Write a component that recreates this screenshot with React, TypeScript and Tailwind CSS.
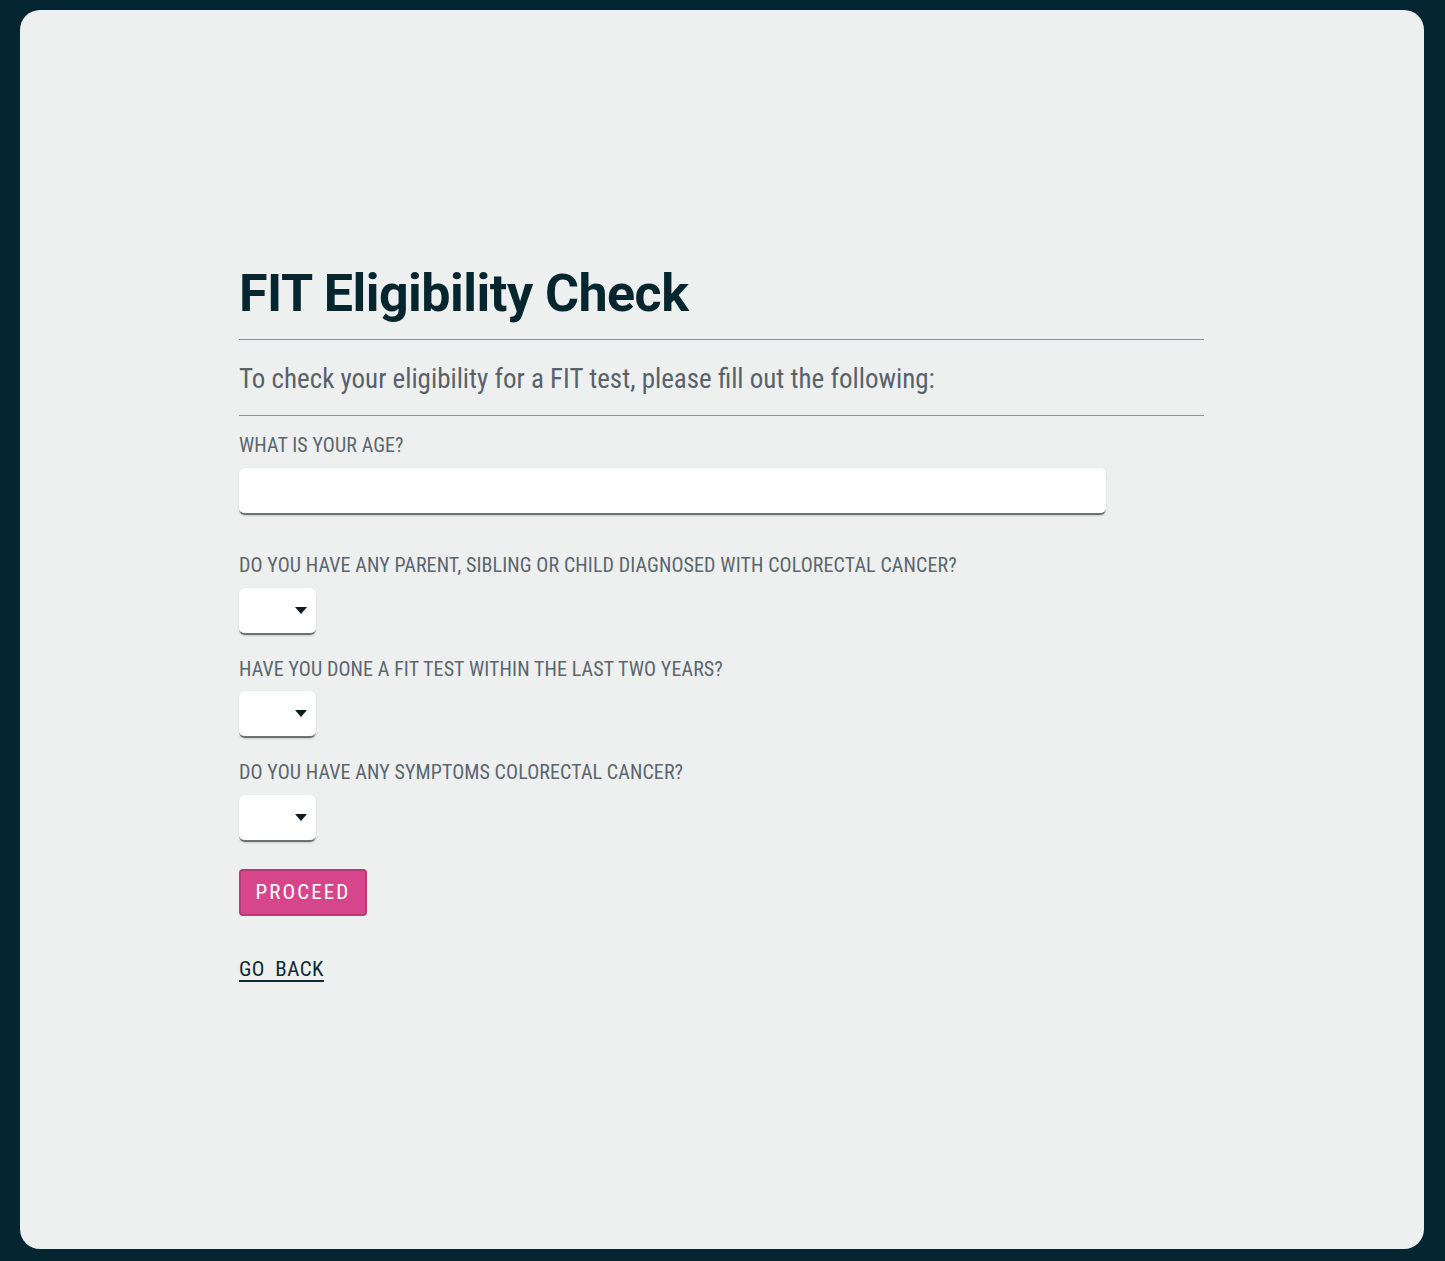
const labelCls = 'block text-[20px] leading-[22px] uppercase text-[#5b656d] tracking-[0.005em]'
const fieldCls = 'bg-white rounded-[6px] border-b-2 border-[#6b7275] shadow-[0_1px_2px_rgba(0,0,0,0.15)] h-[47px]'

function SelectBox() {
  return (
    <div className={`${fieldCls} w-[77px] flex items-center justify-end pr-[9px]`}>
      <svg width="12" height="7" viewBox="0 0 12 7"><path d="M0 0h12L6 7z" fill="#0e1a1f" /></svg>
    </div>
  )
}

export default function App() {
  return (
    <div className="min-h-screen bg-[#032631] p-[10px_21px_12px_20px] font-['Roboto',sans-serif]" style={{ fontStretch: 'condensed' }}>
      <div className="h-[1239px] rounded-[20px] bg-[#eef0f0] flex flex-col pt-[254px] pl-[219px] pr-[220px]">
        <h1 className="text-[52px] leading-[60px] font-bold text-[#05252f] tracking-[-0.01em]" style={{ fontStretch: 'normal' }}>FIT Eligibility Check</h1>
        <hr className="mt-[15px] border-t border-[#8c9396]" />
        <p className="mt-[22px] text-[27px] leading-[34px] text-[#57626b]">
          To check your eligibility for a FIT test, please fill out the following:
        </p>
        <hr className="mt-[19px] border-t border-[#8c9396]" />
        <label className={`${labelCls} mt-[18px]`}>What is your age?</label>
        <div className={`${fieldCls} mt-[12px] w-[867px]`} />
        <label className={`${labelCls} mt-[39px]`}>Do you have any parent, sibling or child diagnosed with colorectal cancer?</label>
        <div className="mt-[12px]"><SelectBox /></div>
        <label className={`${labelCls} mt-[23px]`}>Have you done a FIT test within the last two years?</label>
        <div className="mt-[11px]"><SelectBox /></div>
        <label className={`${labelCls} mt-[23px]`}>Do you have any symptoms colorectal cancer?</label>
        <div className="mt-[12px]"><SelectBox /></div>
        <button className="mt-[27px] block h-[47px] w-[128px] rounded-[4px] bg-[#d6468a] border-2 border-[#b93a76] text-white text-[21px] tracking-[0.1em]">
          PROCEED
        </button>
        <a href="#" className="mt-[41px] self-start text-[21px] leading-[24px] text-[#0b2a33] underline underline-offset-[4px] decoration-[2px] tracking-[0.02em]">
          GO&nbsp;&nbsp;BACK
        </a>
      </div>
    </div>
  )
}
